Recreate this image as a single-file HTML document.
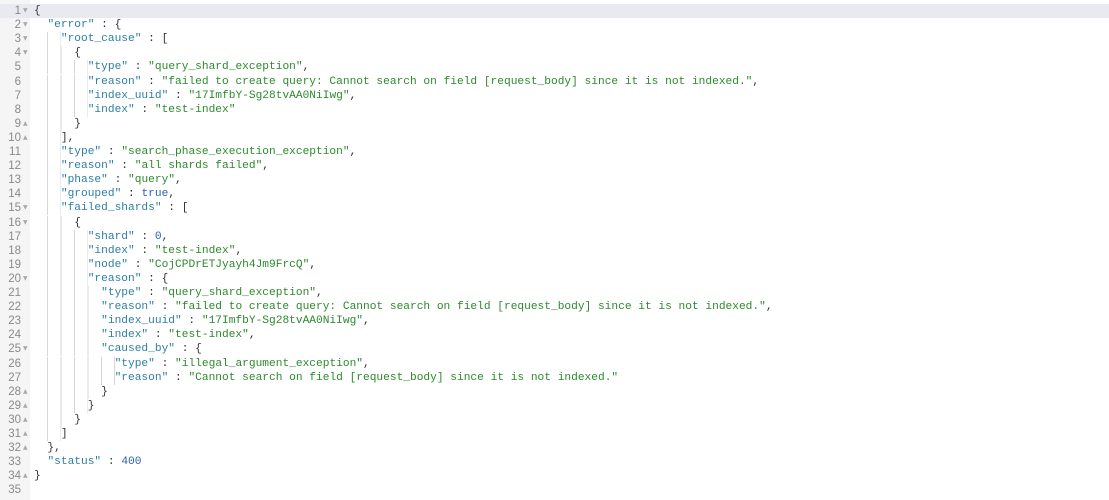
<!DOCTYPE html>
<html><head><meta charset="utf-8"><style>
html,body{margin:0;padding:0;width:1109px;height:500px;overflow:hidden;background:#fff}
#gut{position:absolute;left:0;top:0;width:30px;height:500px;background:#f5f5f5}
#act{position:absolute;left:0;top:4px;width:1109px;height:14px;background:#e8eaf0}
.n{position:absolute;left:0;width:21px;text-align:right;font:11.5px "Liberation Sans",sans-serif;color:#8a8a8a;line-height:14.1px}
.a{position:absolute;left:23px;font:6px "DejaVu Sans",sans-serif;color:#aaa;line-height:14.1px}
.l{position:absolute;left:34px;white-space:pre;font:11.2px "Liberation Mono",monospace;color:#333;line-height:14.1px}
.g{position:absolute;height:14.1px;background:repeating-linear-gradient(90deg,#d6d6d6 0 1px,transparent 1px 13.44px)}
.k{color:#2d7fa3}.s{color:#2c8a2c}.b{color:#2c5fb5}
</style></head><body>
<div id="gut"></div><div id="act"></div>
<div id="c"></div>
<script>
var L=[
[0,'{'],
[2,'<span class=k>"error"</span> : {'],
[4,'<span class=k>"root_cause"</span> : ['],
[6,'{'],
[8,'<span class=k>"type"</span> : <span class=s>"query_shard_exception"</span>,'],
[8,'<span class=k>"reason"</span> : <span class=s>"failed to create query: Cannot search on field [request_body] since it is not indexed."</span>,'],
[8,'<span class=k>"index_uuid"</span> : <span class=s>"17ImfbY-Sg28tvAA0NiIwg"</span>,'],
[8,'<span class=k>"index"</span> : <span class=s>"test-index"</span>'],
[6,'}'],
[4,'],'],
[4,'<span class=k>"type"</span> : <span class=s>"search_phase_execution_exception"</span>,'],
[4,'<span class=k>"reason"</span> : <span class=s>"all shards failed"</span>,'],
[4,'<span class=k>"phase"</span> : <span class=s>"query"</span>,'],
[4,'<span class=k>"grouped"</span> : <span class=b>true</span>,'],
[4,'<span class=k>"failed_shards"</span> : ['],
[6,'{'],
[8,'<span class=k>"shard"</span> : <span class=b>0</span>,'],
[8,'<span class=k>"index"</span> : <span class=s>"test-index"</span>,'],
[8,'<span class=k>"node"</span> : <span class=s>"CojCPDrETJyayh4Jm9FrcQ"</span>,'],
[8,'<span class=k>"reason"</span> : {'],
[10,'<span class=k>"type"</span> : <span class=s>"query_shard_exception"</span>,'],
[10,'<span class=k>"reason"</span> : <span class=s>"failed to create query: Cannot search on field [request_body] since it is not indexed."</span>,'],
[10,'<span class=k>"index_uuid"</span> : <span class=s>"17ImfbY-Sg28tvAA0NiIwg"</span>,'],
[10,'<span class=k>"index"</span> : <span class=s>"test-index"</span>,'],
[10,'<span class=k>"caused_by"</span> : {'],
[12,'<span class=k>"type"</span> : <span class=s>"illegal_argument_exception"</span>,'],
[12,'<span class=k>"reason"</span> : <span class=s>"Cannot search on field [request_body] since it is not indexed."</span>'],
[10,'}'],
[8,'}'],
[6,'}'],
[4,']'],
[2,'},'],
[2,'<span class=k>"status"</span> : <span class=b>400</span>'],
[0,'}'],
[0,'']];
var down=[1,2,3,4,15,16,20,25],up=[9,10,28,29,30,31,32,34];
var h='',cw=6.72;
L.forEach(function(x,i){var t=4+i*14.1,n=i+1;
h+='<div class=n style="top:'+t+'px">'+n+'</div>';
if(down.indexOf(n)>=0)h+='<div class=a style="top:'+t+'px">&#9660;</div>';
if(up.indexOf(n)>=0)h+='<div class=a style="top:'+t+'px">&#9650;</div>';
if(x[0]>2)h+='<div class=g style="top:'+t+'px;left:'+(34+2*cw)+'px;width:'+((x[0]-2)*cw)+'px"></div>';
h+='<div class=l style="top:'+t+'px">'+' '.repeat(x[0])+x[1]+'</div>';});
document.getElementById('c').innerHTML=h;
</script>
</body></html>
